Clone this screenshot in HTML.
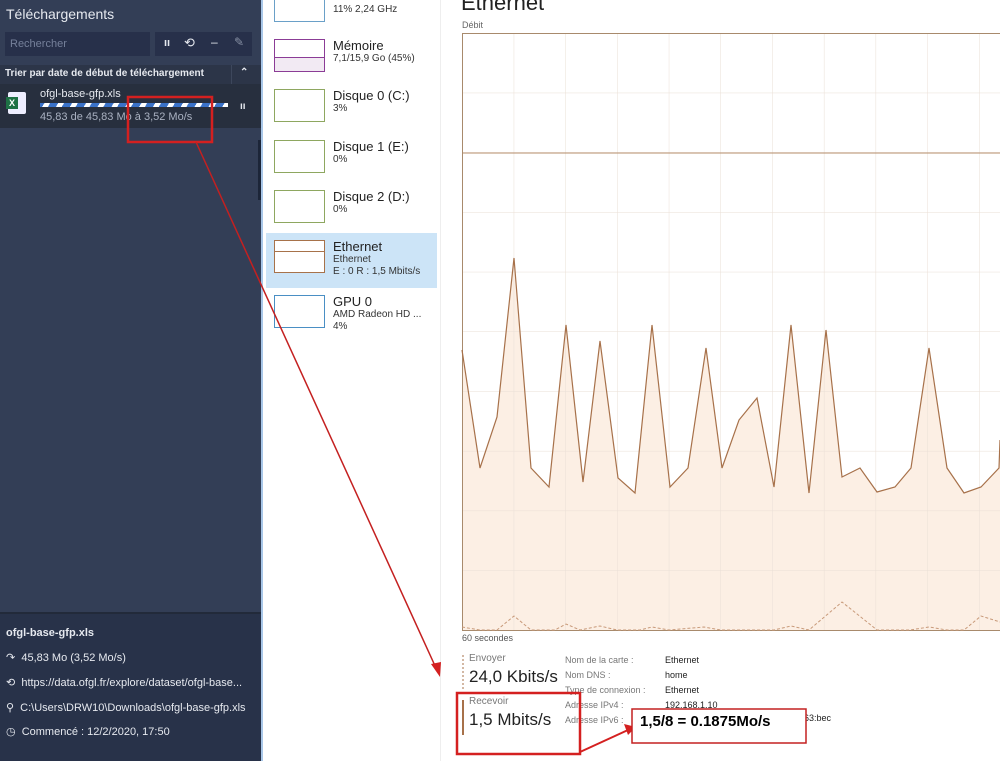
<!DOCTYPE html>
<html><head><meta charset="utf-8"><style>
*{margin:0;padding:0;box-sizing:border-box}
body{width:1000px;height:761px;overflow:hidden;background:#fff;font-family:"Liberation Sans",sans-serif;position:relative}
.a{position:absolute}
#left{left:0;top:0;width:261px;height:761px;background:#333e56}
.t{color:#e6e9ef}
.sm{font-size:11px}
.thumb{position:absolute;left:274px;width:51px;height:33px;border:1px solid}
.lab{position:absolute;left:333px;color:#222;font-size:13px}
.sub{font-size:10px;color:#333;line-height:12px}
</style></head><body>
<div id="left" class="a">
  <div class="a t" style="left:6px;top:6px;font-size:14px">Téléchargements</div>
  <div class="a" style="left:5px;top:32px;width:145px;height:24px;background:#27304a"></div>
  <div class="a" style="left:10px;top:38px;font-size:11px;color:#75809a">Rechercher</div>
  <div class="a" style="left:155px;top:32px;width:97px;height:24px;background:#27304a"></div>
  <div class="a t" style="left:164px;top:37px;font-size:11px;font-weight:bold">ıı</div>
  <div class="a t" style="left:184px;top:35px;font-size:13px">⟲</div>
  <div class="a t" style="left:211px;top:35px;font-size:12px">–</div>
  <div class="a" style="left:234px;top:35px;font-size:12px;color:#8891a5">✎</div>
  <div class="a" style="left:0;top:65px;width:261px;height:19px;background:#2c3548"></div>
  <div class="a t" style="left:5px;top:68px;font-size:10px;font-weight:bold">Trier par date de début de téléchargement</div>
  <div class="a" style="left:231px;top:65px;width:1px;height:19px;background:#3d475c"></div>
  <div class="a t" style="left:240px;top:67px;font-size:10px;font-weight:bold">⌃</div>
  <div class="a" style="left:0;top:84px;width:261px;height:44px;background:#272f3e"></div>
  <div class="a" style="left:8px;top:92px;width:18px;height:22px;background:#eef;border-radius:2px"></div>
  <div class="a" style="left:6px;top:97px;width:12px;height:12px;background:#1e7145;color:#fff;font-size:9px;font-weight:bold;text-align:center;line-height:12px">X</div>
  <div class="a t" style="left:40px;top:88px;font-size:11px">ofgl-base-gfp.xls</div>
  <div class="a" style="left:40px;top:103px;width:188px;height:4px;background:repeating-linear-gradient(-60deg,#fff 0 5px,#3a72c8 5px 12px)"></div>
  <div class="a" style="left:40px;top:111px;font-size:11px;color:#a9b1c1">45,83 de 45,83 Mo à 3,52 Mo/s</div>
  <div class="a t" style="left:240px;top:101px;font-size:10px;font-weight:bold">ıı</div>
  <div class="a" style="left:0;top:612px;width:261px;height:149px;background:#283249;border-top:2px solid #222a3a"></div>
  <div class="a t" style="left:6px;top:627px;font-size:11px;font-weight:bold">ofgl-base-gfp.xls</div>
  <div class="a t sm" style="left:6px;top:651px">↷&nbsp; 45,83 Mo (3,52 Mo/s)</div>
  <div class="a t sm" style="left:6px;top:676px">⟲&nbsp; https://data.ofgl.fr/explore/dataset/ofgl-base...</div>
  <div class="a t sm" style="left:6px;top:701px">⚲&nbsp; C:\Users\DRW10\Downloads\ofgl-base-gfp.xls</div>
  <div class="a t sm" style="left:6px;top:725px">◷&nbsp; Commencé : 12/2/2020, 17:50</div>
</div>
<div class="a" style="left:261px;top:0;width:2px;height:761px;background:#a9c7e8"></div>
<div class="a" style="left:258px;top:140px;width:3px;height:60px;background:#1c2538"></div>
<div class="a" style="left:440px;top:0;width:1px;height:761px;background:#eee"></div>
<!-- sidebar -->
<div class="a" style="left:274px;top:0;width:51px;height:22px;border:1px solid #6aa0c8;border-top:none"></div>
<div class="lab sub" style="top:4px;font-size:10px">11% 2,24 GHz</div>
<div class="thumb" style="top:39px;border-color:#8b3c96"><div style="position:absolute;left:0;right:0;bottom:0;height:14px;background:#f2eaf3;border-top:1px solid #8b3c96"></div></div>
<div class="lab" style="top:38px">Mémoire<div class="sub">7,1/15,9 Go (45%)</div></div>
<div class="thumb" style="top:89px;border-color:#8ea760"></div>
<div class="lab" style="top:88px">Disque 0 (C:)<div class="sub">3%</div></div>
<div class="thumb" style="top:140px;border-color:#8ea760"></div>
<div class="lab" style="top:139px">Disque 1 (E:)<div class="sub">0%</div></div>
<div class="thumb" style="top:190px;border-color:#8ea760"></div>
<div class="lab" style="top:189px">Disque 2 (D:)<div class="sub">0%</div></div>
<div class="a" style="left:266px;top:233px;width:171px;height:55px;background:#cce4f7"></div>
<div class="thumb" style="top:240px;border-color:#a7724a;background:#fff"><div style="position:absolute;left:0;right:0;top:10px;border-top:1px solid #a7724a"></div></div>
<div class="lab" style="top:239px">Ethernet<div class="sub">Ethernet<br>E : 0 R : 1,5 Mbits/s</div></div>
<div class="thumb" style="top:295px;border-color:#4a8fc4"></div>
<div class="lab" style="top:294px">GPU 0<div class="sub">AMD Radeon HD ...<br>4%</div></div>
<!-- main -->
<div class="a" style="left:461px;top:-10px;font-size:22px;color:#222">Ethernet</div>
<div class="a" style="left:462px;top:20px;font-size:9px;color:#666">Débit</div>
<svg class="a" style="left:0;top:0" width="1000" height="761">
<defs><pattern id="g" x="462" y="33" width="51.7" height="59.7" patternUnits="userSpaceOnUse"><path d="M0 0V59.7M0 0H51.7" stroke="#eadfd6" fill="none"/></pattern></defs>
<polygon fill="#fcefe4" points="462,630 462,350 480,468 497,417 514,258 531,468 549,487 566,325 583,482 600,341 618,478 635,493 652,325 670,487 688,468 706,348 722,468 739,420 757,398 774,487 791,325 809,493 826,330 842,477 860,468 877,492 895,487 911,468 929,348 947,468 964,493 981,487 999,468 1000,440 1000,630"/>
<rect x="462" y="33" width="540" height="597" fill="url(#g)"/>
<line x1="462" y1="153" x2="1000" y2="153" stroke="#b48c6a"/>
<rect x="462.5" y="33.5" width="540" height="597" fill="none" stroke="#a88a6c"/>
<polyline fill="none" stroke="#a7714a" stroke-width="1.2" points="462,350 480,468 497,417 514,258 531,468 549,487 566,325 583,482 600,341 618,478 635,493 652,325 670,487 688,468 706,348 722,468 739,420 757,398 774,487 791,325 809,493 826,330 842,477 860,468 877,492 895,487 911,468 929,348 947,468 964,493 981,487 999,468 1000,440"/>
<polyline fill="none" stroke="#c89a7a" stroke-dasharray="3,2" points="462,627 480,630 497,630 514,616 531,630 555,630 566,624 580,630 600,626 617,630 640,630 652,627 669,630 704,627 721,630 774,630 791,626 809,630 842,602 877,630 910,630 929,627 947,630 964,630 981,616 1000,622"/>
<line x1="463" y1="655" x2="463" y2="690" stroke="#a7714a" stroke-dasharray="2,2"/>
<line x1="463" y1="700" x2="463" y2="735" stroke="#a7714a" stroke-width="2"/>
</svg>
<div class="a" style="left:462px;top:633px;font-size:9px;color:#555">60 secondes</div>
<div class="a" style="left:469px;top:653px;font-size:10px;color:#777">Envoyer</div>
<div class="a" style="left:469px;top:667px;font-size:17px;color:#222">24,0 Kbits/s</div>
<div class="a" style="left:469px;top:696px;font-size:10px;color:#777">Recevoir</div>
<div class="a" style="left:469px;top:710px;font-size:17px;color:#222">1,5 Mbits/s</div>
<div class="a" style="left:565px;top:653px;font-size:9px;color:#777;line-height:15px">Nom de la carte :<br>Nom DNS :<br>Type de connexion :<br>Adresse IPv4 :<br>Adresse IPv6 :</div>
<div class="a" style="left:665px;top:653px;font-size:9px;color:#222;line-height:15px">Ethernet<br>home<br>Ethernet<br>192.168.1.10</div>
<div class="a" style="left:804px;top:713px;font-size:9px;color:#222">63:bec</div>
<!-- annotations -->
<svg class="a" style="left:0;top:0" width="1000" height="761">
<rect x="128" y="97" width="84" height="45" fill="none" stroke="#d42020" stroke-width="2.5"/>
<line x1="196" y1="142" x2="436" y2="668" stroke="#c42020" stroke-width="1.5"/>
<polygon points="440,677 431,664 441,662" fill="#d42020"/>
<rect x="457" y="693" width="123" height="61" fill="none" stroke="#d42020" stroke-width="2.5"/>
<line x1="580" y1="752" x2="628" y2="730" stroke="#d42020" stroke-width="2"/>
<polygon points="636,727 624,724 628,735" fill="#d42020"/>
<rect x="632" y="709" width="174" height="34" fill="#fff" stroke="#c42020" stroke-width="1.5"/>
<text x="640" y="726" font-family="Liberation Sans" font-weight="bold" font-size="15" fill="#000">1,5/8 = 0.1875Mo/s</text>
</svg>
</body></html>
